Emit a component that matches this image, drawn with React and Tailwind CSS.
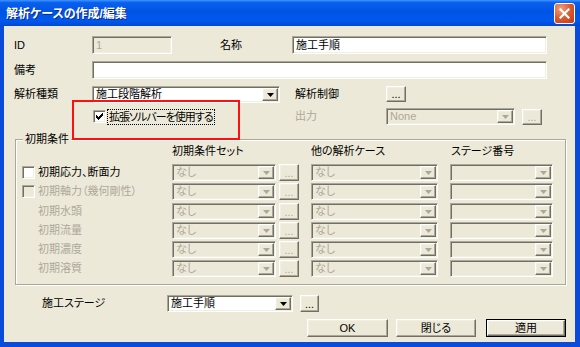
import React from "react";

const sunken =
  "border border-t-[#ACA899] border-l-[#ACA899] border-b-white border-r-white shadow-[inset_1px_1px_0_#716F64,inset_-1px_-1px_0_#F1EFE2]";
const raised =
  "border border-t-white border-l-white border-b-[#716F64] border-r-[#716F64] shadow-[inset_-1px_-1px_0_#ACA899,inset_1px_1px_0_#F1EFE2] bg-[#ECE9D8]";

const Arrow = ({ disabled }) => (
  <svg width="7" height="4" viewBox="0 0 7 4">
    <path d="M0 0h7L3.5 4z" fill={disabled ? "#ACA899" : "#000"} />
  </svg>
);

const Combo = ({ className = "", value = "", disabled = false }) => (
  <div
    className={`${className} ${sunken} flex p-[1px] ${
      disabled ? "bg-[#ECE9D8] text-[#ACA899]" : "bg-white text-black"
    }`}
  >
    <div className="flex-1 pl-[2px] flex items-center whitespace-nowrap overflow-hidden">
      {value}
    </div>
    <div className={`w-[16px] h-full flex items-center justify-center ${raised}`}>
      <Arrow disabled={disabled} />
    </div>
  </div>
);

const Field = ({ className = "", value = "", disabled = false }) => (
  <div
    className={`${className} ${sunken} flex items-center px-[3px] ${
      disabled ? "bg-[#ECE9D8] text-[#ACA899]" : "bg-white text-black"
    }`}
  >
    {value}
  </div>
);

const Btn = ({ className = "", children, disabled = false }) => (
  <div
    className={`${className} ${raised} flex items-center justify-center ${
      disabled ? "text-[#ACA899]" : "text-black"
    }`}
  >
    {children}
  </div>
);

const Check = ({ checked = false, disabled = false }) => (
  <div
    className={`w-[13px] h-[13px] shrink-0 ${sunken} flex items-center justify-center ${
      disabled ? "bg-[#ECE9D8]" : "bg-white"
    }`}
  >
    {checked && (
      <svg width="7" height="7" viewBox="0 0 7 7">
        <path d="M0 2h1v1h1v1h1V3h1V2h1V1h1V0h1v3H6v1H5v1H4v1H3v1H2V6H1V5H0z" fill="#000" />
      </svg>
    )}
  </div>
);

const initRows = [
  { label: "初期応力、断面力", check: true, enabled: true, mt: "mt-[6px]" },
  { label: "初期軸力（幾何剛性）", check: true, enabled: false, mt: "mt-[2px]" },
  { label: "初期水頭", mt: "mt-[3px]" },
  { label: "初期流量", mt: "mt-[2px]" },
  { label: "初期濃度", mt: "mt-[2px]" },
  { label: "初期溶質", mt: "mt-[2px]" },
];

const TitleBar = () => (
  <div className="h-[26px] shrink-0 flex items-center pl-[6px] pr-[5px] bg-[linear-gradient(180deg,#3D95FF_0%,#0A5FEF_10%,#0054E3_45%,#0058EE_80%,#0348D0_100%)]">
    <span className="flex-1 text-white font-bold text-[12px] leading-[14px] pt-[1px] [text-shadow:1px_1px_0_#0A2A8A]">
      解析ケースの作成/編集
    </span>
    <div className="w-[21px] h-[21px] rounded-[3px] border border-white bg-[radial-gradient(circle_at_30%_25%,#F0A080_0%,#DA5A30_50%,#C03A15_100%)] flex items-center justify-center">
      <svg width="11" height="11" viewBox="0 0 11 11">
        <path d="M1.5 1.5l8 8M9.5 1.5l-8 8" stroke="#fff" strokeWidth="2.2" strokeLinecap="square" />
      </svg>
    </div>
  </div>
);

export default function App() {
  return (
    <div className="w-[580px] h-[347px] flex flex-col bg-[#0A4BDB] font-['Liberation_Sans','Noto_Sans_CJK_JP',sans-serif] text-[11px] [font-feature-settings:'palt'] text-black overflow-hidden">
      <TitleBar />
      <div className="flex-1 flex ml-[4px] mr-[5px] mb-[5px]">
        <div className="relative flex-1 bg-[#ECE9D8] flex flex-col pl-[10px]">
          {/* ID / 名称 */}
          <div className="mt-[10px] h-[18px] flex items-center">
            <span className="w-[78px]">ID</span>
            <Field className="w-[80px] h-full" value="1" disabled />
            <span className="ml-[48px] w-[72px]">名称</span>
            <Field className="w-[255px] h-full" value="施工手順" />
          </div>

          {/* 備考 */}
          <div className="mt-[7px] h-[18px] flex items-center">
            <span className="w-[78px]">備考</span>
            <Field className="w-[455px] h-full" />
          </div>

          {/* 解析種類 / 解析制御 */}
          <div className="mt-[7px] h-[17px] flex items-center">
            <span className="w-[78px]">解析種類</span>
            <Combo className="w-[188px] h-full" value="施工段階解析" />
            <span className="ml-[15px] w-[91px]">解析制御</span>
            <Btn className="w-[20px] h-[16px] self-start leading-[8px]">...</Btn>
          </div>

          {/* 拡張ソルバー / 出力 */}
          <div className="mt-[5px] h-[17px] flex items-center">
            <div className="w-[281px] flex items-center pl-[79px]">
              <Check checked />
              <span className="ml-[2px] px-[1px] leading-[14px] tracking-[-1px] outline outline-1 outline-dotted outline-black">
                拡張ソルバーを使用する
              </span>
            </div>
            <span className="w-[91px] text-[#ACA899]">出力</span>
            <Combo className="w-[129px] h-full" value="None" disabled />
            <Btn className="ml-[7px] w-[20px] h-[16px] leading-[8px]" disabled>
              ...
            </Btn>
          </div>

          {/* 初期条件 group */}
          <div className="relative mt-[14px] ml-[1px] w-[551px] border border-[#ACA899] shadow-[inset_1px_1px_0_#fff,1px_1px_0_#fff] pt-[4px] pb-[7px]">
            <span className="absolute -top-[8px] left-[7px] px-[2px] leading-[14px] bg-[#ECE9D8]">
              初期条件
            </span>
            <div className="h-[14px] flex items-center">
              <span className="w-[156px]" />
              <span className="w-[139px]">初期条件セット</span>
              <span className="w-[140px]">他の解析ケース</span>
              <span>ステージ番号</span>
            </div>
            {initRows.map((row, idx) => (
              <div key={idx} className={`${row.mt} h-[17px] flex items-center`}>
                <div className="w-[156px] flex items-center pl-[6px]">
                  {row.check ? (
                    <Check disabled={!row.enabled} />
                  ) : (
                    <span className="w-[13px]" />
                  )}
                  <span
                    className={`ml-[3px] whitespace-nowrap ${
                      row.enabled ? "text-black" : "text-[#ACA899]"
                    }`}
                  >
                    {row.label}
                  </span>
                </div>
                <Combo className="w-[104px] h-full" value="なし" disabled />
                <Btn className="ml-[3px] w-[20px] h-full leading-[8px]" disabled>
                  ...
                </Btn>
                <Combo className="ml-[12px] w-[127px] h-full" value="なし" disabled />
                <Combo className="ml-[12px] w-[103px] h-full" disabled />
              </div>
            ))}
          </div>

          {/* 施工ステージ */}
          <div className="mt-[10px] h-[17px] flex items-center">
            <span className="ml-[28px] w-[125px]">施工ステージ</span>
            <Combo className="w-[126px] h-full" value="施工手順" />
            <Btn className="ml-[7px] w-[19px] h-full leading-[8px]">...</Btn>
          </div>

          {/* buttons */}
          <div className="mt-[7px] h-[18px] flex items-stretch">
            <Btn className="ml-[293px] w-[81px]">OK</Btn>
            <Btn className="ml-[8px] w-[80px]">閉じる</Btn>
            <div className="ml-[10px] w-[80px] border border-black flex">
              <Btn className="flex-1">適用</Btn>
            </div>
          </div>

          {/* annotation highlight */}
          <div className="absolute left-[68px] top-[74px] w-[168px] h-[40px] border-2 border-[#FF1010] pointer-events-none" />
        </div>
      </div>
    </div>
  );
}
